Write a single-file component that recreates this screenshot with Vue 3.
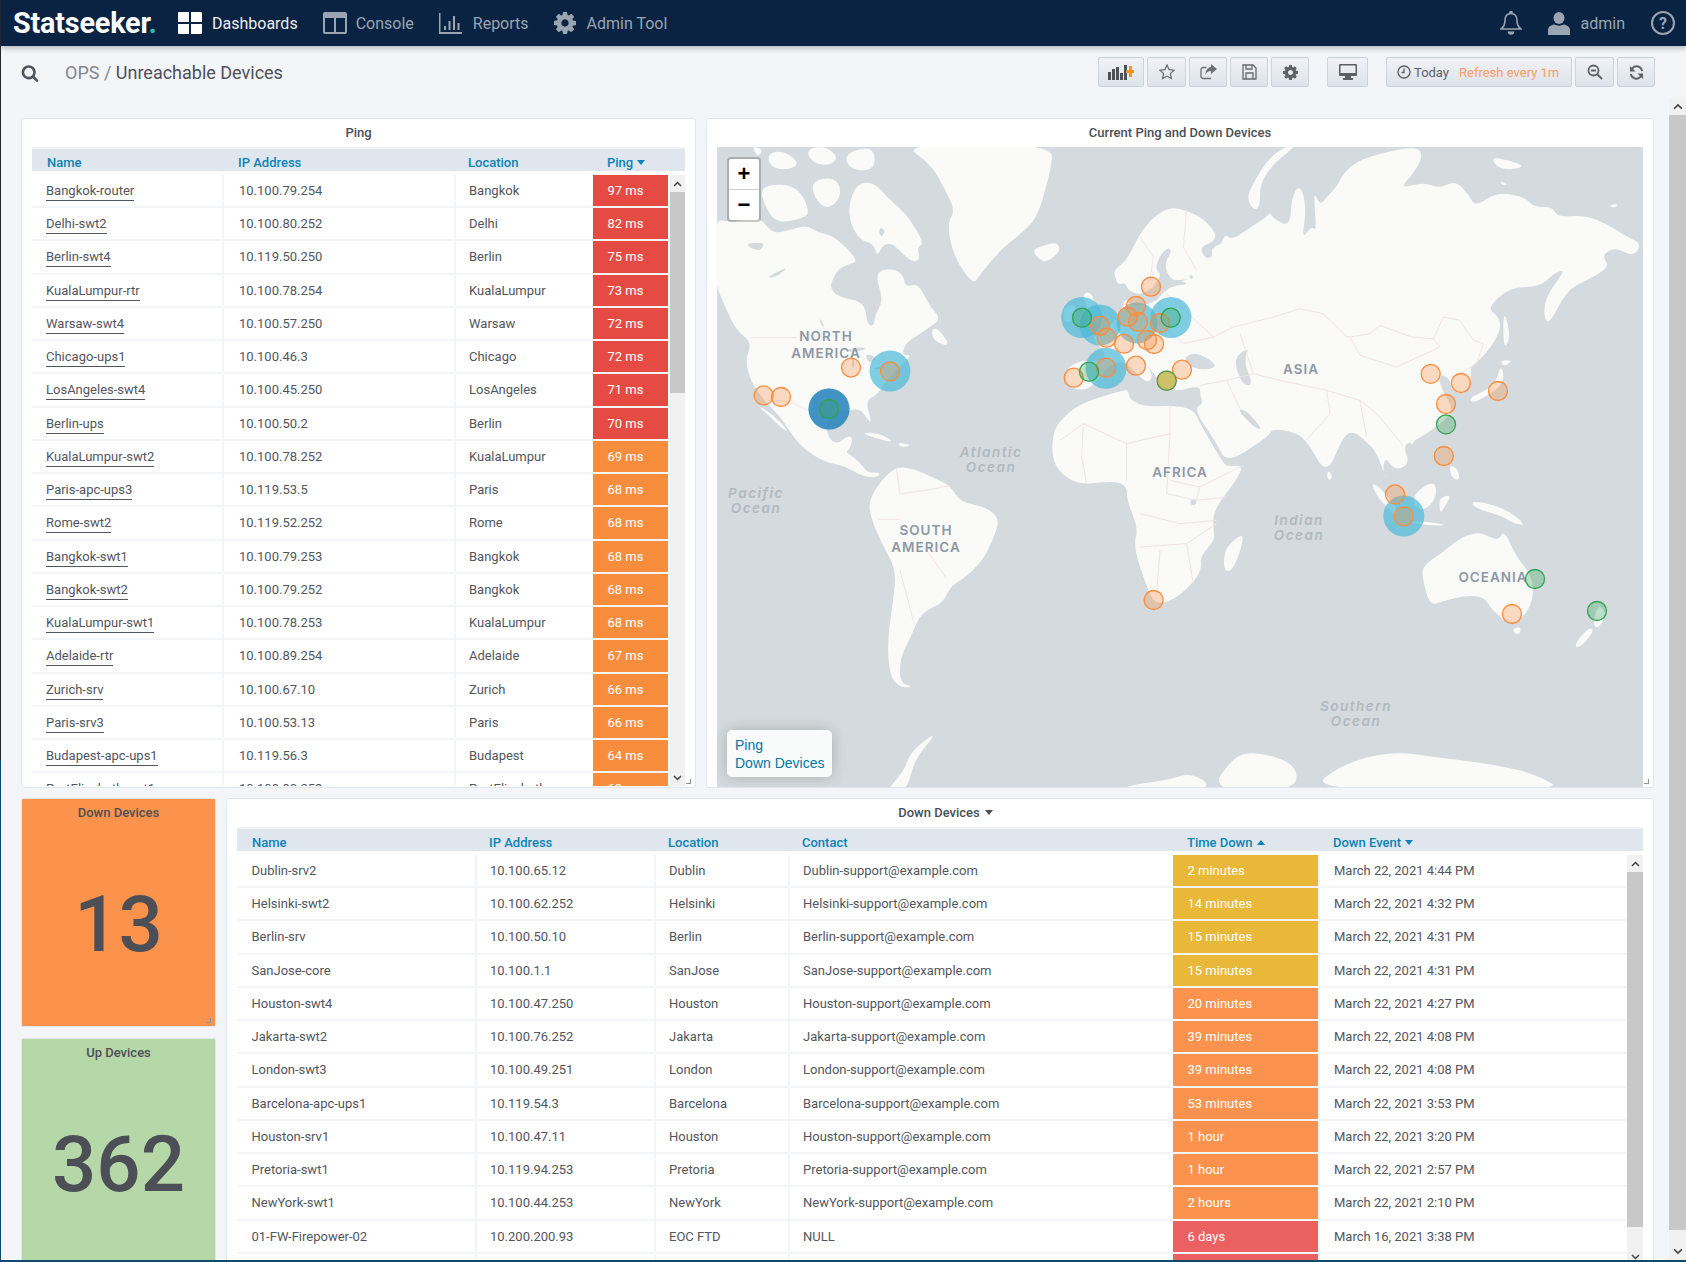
<script setup>
const gearPath = 'M1152 896q0-106-75-181t-181-75-181 75-75 181 75 181 181 75 181-75 75-181zm512-109v222q0 12-8 23t-20 13l-185 28q-19 54-39 91 35 50 107 138 10 12 10 25t-9 23q-27 37-99 108t-94 71q-12 0-26-9l-138-108q-44 23-91 38-16 136-29 186-7 28-36 28h-222q-14 0-24.5-8.5t-11.5-21.5l-28-184q-49-16-90-37l-141 107q-10 9-25 9-14 0-25-11-126-114-165-168-7-10-7-23 0-12 8-23 15-21 51-66.5t54-70.5q-27-50-41-99l-183-27q-13-2-21-12.5t-8-23.5v-222q0-12 8-23t19-13l186-28q14-46 39-92-40-57-107-138-10-12-10-24 0-10 9-23 26-36 98.5-107.5t94.5-71.5q13 0 26 10l138 107q44-23 91-38 16-136 29-186 7-28 36-28h222q14 0 24.5 8.5t11.5 21.5l28 184q49 16 90 37l142-107q9-9 24-9 13 0 25 10 129 119 165 170 7 8 7 22 0 12-8 23-15 21-51 66.5t-54 70.5q26 50 41 98l183 28q13 2 21 12.5t8 23.5z'
const searchPath = 'M1216 832q0-185-131.500-316.500t-316.500-131.500-316.500 131.500-131.500 316.500 131.500 316.500 316.500 131.500 316.500-131.500 131.500-316.500zm512 832q0 52-38 90t-90 38q-54 0-90-38l-343-342q-179 124-399 124-143 0-273.500-55.500t-225-150-150-225-55.500-273.500 55.500-273.500 150-225 225-150 273.500-55.500 273.500 55.500 225 150 150 225 55.500 273.500q0 220-124 399l343 343q37 37 37 90z'

const ping = [
  ['Bangkok-router', '10.100.79.254', 'Bangkok', 97],
  ['Delhi-swt2', '10.100.80.252', 'Delhi', 82],
  ['Berlin-swt4', '10.119.50.250', 'Berlin', 75],
  ['KualaLumpur-rtr', '10.100.78.254', 'KualaLumpur', 73],
  ['Warsaw-swt4', '10.100.57.250', 'Warsaw', 72],
  ['Chicago-ups1', '10.100.46.3', 'Chicago', 72],
  ['LosAngeles-swt4', '10.100.45.250', 'LosAngeles', 71],
  ['Berlin-ups', '10.100.50.2', 'Berlin', 70],
  ['KualaLumpur-swt2', '10.100.78.252', 'KualaLumpur', 69],
  ['Paris-apc-ups3', '10.119.53.5', 'Paris', 68],
  ['Rome-swt2', '10.119.52.252', 'Rome', 68],
  ['Bangkok-swt1', '10.100.79.253', 'Bangkok', 68],
  ['Bangkok-swt2', '10.100.79.252', 'Bangkok', 68],
  ['KualaLumpur-swt1', '10.100.78.253', 'KualaLumpur', 68],
  ['Adelaide-rtr', '10.100.89.254', 'Adelaide', 67],
  ['Zurich-srv', '10.100.67.10', 'Zurich', 66],
  ['Paris-srv3', '10.100.53.13', 'Paris', 66],
  ['Budapest-apc-ups1', '10.119.56.3', 'Budapest', 64],
  ['PortElizabeth-swt1', '10.100.90.253', 'PortElizabeth', 63],
]

const down = [
  ['Dublin-srv2', '10.100.65.12', 'Dublin', 'Dublin-support@example.com', '2 minutes', 'March 22, 2021 4:44 PM', 'yellow'],
  ['Helsinki-swt2', '10.100.62.252', 'Helsinki', 'Helsinki-support@example.com', '14 minutes', 'March 22, 2021 4:32 PM', 'yellow'],
  ['Berlin-srv', '10.100.50.10', 'Berlin', 'Berlin-support@example.com', '15 minutes', 'March 22, 2021 4:31 PM', 'yellow'],
  ['SanJose-core', '10.100.1.1', 'SanJose', 'SanJose-support@example.com', '15 minutes', 'March 22, 2021 4:31 PM', 'yellow'],
  ['Houston-swt4', '10.100.47.250', 'Houston', 'Houston-support@example.com', '20 minutes', 'March 22, 2021 4:27 PM', 'orange'],
  ['Jakarta-swt2', '10.100.76.252', 'Jakarta', 'Jakarta-support@example.com', '39 minutes', 'March 22, 2021 4:08 PM', 'orange'],
  ['London-swt3', '10.100.49.251', 'London', 'London-support@example.com', '39 minutes', 'March 22, 2021 4:08 PM', 'orange'],
  ['Barcelona-apc-ups1', '10.119.54.3', 'Barcelona', 'Barcelona-support@example.com', '53 minutes', 'March 22, 2021 3:53 PM', 'orange'],
  ['Houston-srv1', '10.100.47.11', 'Houston', 'Houston-support@example.com', '1 hour', 'March 22, 2021 3:20 PM', 'orange'],
  ['Pretoria-swt1', '10.119.94.253', 'Pretoria', 'Pretoria-support@example.com', '1 hour', 'March 22, 2021 2:57 PM', 'orange'],
  ['NewYork-swt1', '10.100.44.253', 'NewYork', 'NewYork-support@example.com', '2 hours', 'March 22, 2021 2:10 PM', 'orange'],
  ['01-FW-Firepower-02', '10.200.200.93', 'EOC FTD', 'NULL', '6 days', 'March 16, 2021 3:38 PM', 'red'],
  ['', '', '', '', '', '', 'red'],
]

// closed outline rounded through the midpoints of its edges
function smooth(str) {
  const p = str.trim().split(/\s+/).map((s) => s.split(',').map(Number))
  const mid = (a, b) => [(a[0] + b[0]) / 2, (a[1] + b[1]) / 2]
  const m0 = mid(p[0], p[1])
  let d = `M${m0[0]} ${m0[1]}`
  for (let i = 1; i <= p.length; i++) {
    const c = p[i % p.length]
    const m = mid(c, p[(i + 1) % p.length])
    d += `Q${c[0]} ${c[1]} ${m[0]} ${m[1]}`
  }
  return d + 'Z'
}

// traced at 3x from (717,147)
const naLand = [
  '0,215 30,225 80,220 130,215 150,240 175,260 230,245 270,235 300,255 345,265 380,295 405,320 420,345 400,350 365,365 345,400 340,425 365,450 420,460 445,480 450,530 470,540 475,500 495,470 490,430 480,400 485,370 530,365 560,385 565,420 600,410 620,440 640,480 672,515 640,540 600,565 565,590 555,625 585,625 545,660 500,710 480,745 445,760 465,830 450,815 430,785 390,790 345,800 325,840 340,880 365,890 385,870 408,868 400,905 385,915 410,930 440,960 453,978 485,975 490,985 465,992 430,985 380,955 320,945 260,905 230,870 190,810 160,780 130,745 100,700 85,640 100,600 95,580 55,545 30,490 0,425 -20,320',
  '555,-10 1010,-10 1000,70 990,110 960,215 900,270 860,300 790,380 770,415 710,330 690,230 715,190 680,120 640,50',
  '395,170 420,110 470,105 510,150 555,190 580,220 622,290 600,300 610,340 580,345 530,290 500,290 480,330 470,290 430,280 400,230',
  '130,120 200,110 250,130 280,200 250,215 210,225 170,220 140,170',
  '150,20 200,10 250,50 210,70 160,60', '265,10 320,-5 365,30 340,55 290,50', '380,20 470,-5 475,70 400,70',
  '285,100 360,90 375,150 330,190 290,150', '105,-5 140,10 120,30', '645,545 665,545 700,597 665,590 645,570',
  '115,770 165,800 215,852 200,850 150,800', '430,855 490,860 535,887 475,875', '540,885 588,895 550,902',
]
const naSea = [
  '85,290 145,285 130,312 105,305', '150,390 215,358 185,385 165,392', '305,510 325,540 312,535',
  '375,610 430,600 450,605 420,615', '405,625 415,650 405,668', '445,620 480,630 465,650 450,640', '465,665 495,655 490,668',
  '490,240 505,250 495,270 485,260',
]
// traced at 3x from (1040,147)
const euLand = [
  '75,710 78,670 100,650 135,640 190,645 195,610 150,575 200,545 240,505 255,450 275,480 340,470 370,430 400,410 440,400 470,370 520,300 545,290 555,260 575,280 640,235 680,210 690,195 700,215 750,240 755,150 780,110 800,180 785,280 815,235 830,255 820,130 840,175 860,150 890,120 915,70 975,30 1130,-5 1150,30 1115,85 1080,125 1150,105 1200,125 1245,100 1285,140 1305,180 1370,135 1455,150 1480,180 1540,180 1550,210 1635,205 1700,230 1760,270 1805,290 1780,330 1725,300 1685,325 1710,360 1640,400 1580,430 1520,548 1508,460 1580,365 1540,380 1500,420 1410,420 1340,485 1380,510 1380,560 1330,630 1290,660 1295,680 1280,740 1235,735 1230,695 1200,680 1200,720 1245,790 1190,840 1121,883 1089,895 1110,952 1062,971 1036,927 1027,977 1057,1015 1036,990 1009,914 977,883 940,851 908,870 860,988 800,879 760,855 700,845 690,860 670,879 560,949 530,889 460,785 490,770 480,745 480,715 400,735 365,715 370,725 350,690 310,640 340,680 325,710 290,680 250,640 200,660 175,700 140,730 100,725',
  '225,390 222,370 260,340 300,260 340,210 390,180 440,190 490,215 530,260 520,285 480,300 520,310 470,380 440,400 370,400 340,420 300,445 265,430 255,405 235,415',
  '125,440 155,435 165,480 200,530 130,545 150,500', '70,480 110,470 105,520 70,530',
  '-24,310 10,295 50,285 63,310 20,347 -5,335',
  '620,150 640,110 680,40 740,-5 770,-5 700,50 660,110 660,180 640,190',
  '40,850 75,805 130,765 250,730 265,730 270,760 320,780 390,775 460,785 480,830 545,940 560,959 610,954 590,999 520,1089 520,1149 525,1179 480,1229 485,1264 460,1309 400,1359 345,1372 320,1319 280,1199 295,1144 260,1059 262,1019 225,1001 120,1014 60,979 35,929',
  '605,1159 610,1184 580,1269 555,1274 550,1239 560,1199',
  '865,969 878,989 868,1001 860,989',
  '1350,30 1410,40 1460,60 1380,70', '1380,100 1405,115 1385,115', '1705,175 1735,170 1725,184',
  '1390,505 1400,510 1410,570 1395,605 1390,570', '1380,640 1420,640 1390,660',
  '1290,750 1340,730 1370,700 1380,660 1390,670 1390,710 1345,745 1295,770', '1110,885 1125,880 1115,895',
]
const euSea = [
  '335,445 340,415 365,385 345,365 360,325 385,300 395,315 372,350 390,398 435,405 440,412 395,418 365,440 345,468',
  '480,300 510,295 520,330 495,335', '430,630 470,615 535,655 500,670 450,660',
  '585,630 630,600 610,640 640,715 610,715 590,670', '590,785 620,790 670,850 640,840',
  '445,385 460,385 455,400', '450,1059 470,1054 468,1074 452,1074',
]
const euBorders = [
  '520,570 580,540 700,510 780,485 850,500 920,570 930,570 960,625 1070,660 1200,600 1180,575 1115,570 1020,535 990,560 930,570',
  '1180,575 1210,510 1260,520 1300,580 1330,590 1310,650 1240,690',
  '600,560 640,680 720,700 860,730 960,760 1010,800 1060,860 1089,895', '560,700 640,680',
  '860,730 870,800 800,879', '960,760 980,870', '480,715 560,700 600,785',
  '300,270 340,330 330,400', '440,190 430,300 470,370', '370,430 520,570', '360,470 360,530 430,590 520,570',
  '60,880 130,830 260,890 390,860 390,775', '130,830 125,930 140,1010', '260,890 260,1000',
  '390,860 380,1040 470,1060 560,1050', '300,1100 420,1130 530,1120', '300,1200 440,1190 530,1130', '360,1210 350,1340', '440,1190 460,1310',
  '390,1000 480,1020 610,955', '480,1020 470,1060',
]
// South America, and the islands further south-east, placed on the 2.8x and 2.82x traces
const saLand = [
  '475,850 510,805 550,775 600,780 650,800 700,820 730,860 800,870 840,900 820,950 790,1000 740,1040 700,1060 680,1100 620,1120 590,1180 560,1230 560,1290 600,1297 560,1300 530,1270 525,1180 540,1100 550,1020 510,960 475,890',
  '520,1545 570,1500 590,1450 670,1400 600,1470 580,1545',
]
const saBorders = [
  '550,780 560,840 640,830 700,820', '500,900 560,900 640,980 690,1040', '560,1020 600,1150',
]
const seLand = [
  '680,815 700,820 760,880 745,890 700,850', '800,840 860,805 865,850 830,880 800,870', '770,905 840,905 900,915 840,915',
  '870,850 910,840 880,880 875,885', '960,855 1050,870 1120,915 1080,910 1045,890 975,875', '900,770 925,780 930,810 905,800',
  '825,1010 880,980 930,945 980,930 1010,940 1040,950 1055,925 1090,990 1130,1030 1140,1080 1115,1130 1070,1150 1020,1115 1000,1085 950,1080 880,1095 845,1105 825,1040',
  '1075,1160 1105,1155 1095,1178', '1320,1100 1345,1125 1320,1160 1305,1150', '1295,1155 1310,1165 1270,1205 1250,1200',
  '-30,1545 0,1530 100,1520 180,1500 240,1545', '225,1545 290,1465 350,1450 470,1480 470,1545',
  '500,1545 600,1480 740,1450 870,1465 1050,1485 1160,1510 1220,1545',
]

const blue = [[1081.7,317.5],[1100,325],[1137,323],[1171,317.5],[1106,368.3],[890,371],[829,409],[1403.8,516]]
const orange = [[1151,286.7],[1136,306],[1127.7,316.7],[1138,321.7],[1160,323],[1100,325.7],[1106.7,337.7],[1124,343.7],[1147,340],[1154,344],[1136,365.7],[1106,367.7],[1182,369.7],[1073.7,377.7],[1166.7,380.7],[851,367.6],[890,371.4],[763.6,395.4],[781,397],[1153.6,600],[1430.7,373.9],[1460.9,383],[1498,391],[1446,404],[1443.8,456],[1395,494.4],[1403.8,516.3],[1512,614]]
const green = [[1082,317.7],[1170.7,317.7],[1089,371.7],[1166.7,380.7],[829,409],[1446,424.4],[1535,579],[1597,611]]

const labels = [
  ['NORTH', 826, 341, 'land'], ['AMERICA', 826, 358, 'land'],
  ['SOUTH', 926, 535, 'land'], ['AMERICA', 926, 552, 'land'],
  ['AFRICA', 1180, 477, 'land'], ['ASIA', 1301, 374, 'land'], ['OCEANIA', 1493, 582, 'land'],
  ['Atlantic', 991, 457, 'ocean'], ['Ocean', 991, 472, 'ocean'],
  ['Pacific', 756, 498, 'ocean'], ['Ocean', 756, 513, 'ocean'],
  ['Indian', 1299, 525, 'ocean'], ['Ocean', 1299, 540, 'ocean'],
  ['Southern', 1356, 711, 'ocean'], ['Ocean', 1356, 726, 'ocean'],
]
</script>

<template>
  <div class="frame">
    <div class="page">
      <header class="topnav">
        <div class="logo">Statseeker<span class="logo-dot">.</span></div>
        <nav class="nav">
          <a class="nav-item active">
            <svg class="ic-dash" viewBox="0 0 24 22"><path fill="#fff" d="M0 1a1 1 0 0 1 1-1h10v10H0zM13 0h10a1 1 0 0 1 1 1v9H13zM0 12h11v10H1a1 1 0 0 1-1-1zM13 12h11v9a1 1 0 0 1-1 1H13z"/></svg>
            <span>Dashboards</span>
          </a>
          <a class="nav-item">
            <svg class="ic-dash" viewBox="0 0 24 22"><path fill="#9aa5b1" fill-rule="evenodd" d="M2 0h20a2 2 0 0 1 2 2v18a2 2 0 0 1-2 2H2a2 2 0 0 1-2-2V2a2 2 0 0 1 2-2zM2 6v14h9V6zM13 6v14h9V6z"/></svg>
            <span>Console</span>
          </a>
          <a class="nav-item wide">
            <svg class="ic-rep" viewBox="0 0 23 21"><path fill="#9aa5b1" d="M0 0h1.500v19H23v2H0zM5 13h2v4H5zM9.500 8h2v9h-2zM14 3h2v14h-2zM18.500 10h2v7h-2z"/></svg>
            <span>Reports</span>
          </a>
          <a class="nav-item wide">
            <svg class="ic-gear" viewBox="128 128 1536 1536"><path fill="#9aa5b1" :d="gearPath"/></svg>
            <span>Admin Tool</span>
          </a>
        </nav>
        <div class="nav-right">
          <svg class="ic-bell" viewBox="0 0 22 24" fill="none" stroke="#9aa5b1" stroke-width="1.600"><path d="M11 2.500c-4 0-6 3-6 7 0 5-2 7-4 8.500h20c-2-1.500-4-3.500-4-8.500 0-4-2-7-6-7z"/><circle cx="11" cy="1.500" r="1" fill="#9aa5b1"/><path d="M8.500 20.500a2.500 2.500 0 0 0 5 0" fill="#9aa5b1"/></svg>
          <svg class="ic-user" viewBox="0 0 22 23"><ellipse cx="11" cy="6" rx="5.500" ry="6" fill="#9aa5b1"/><path fill="#9aa5b1" d="M0 23v-5c0-3 3-5 6-5.500 3 1.500 7 1.500 10 0 3 .5 6 2.500 6 5.500v5z"/></svg>
          <span class="admin">admin</span>
          <span class="help">?</span>
        </div>
      </header>

      <div class="toolbar">
        <svg class="ic-search" viewBox="0 0 1792 1792"><path fill="#50545c" :d="searchPath"/></svg>
        <div class="crumb"><span class="crumb-dim">OPS / </span>Unreachable Devices</div>
        <div class="tools">
          <button class="btn w46">
            <svg width="26" height="16" viewBox="0 0 26 16"><path fill="#4e5258" d="M0 8h3v8H0zM4 5h3v11H4zM8 3h3v13H8zM12 9h3v7h-3zM16 1h3v15h-3z"/><path fill="#f7941d" d="M18 6h3V2h3v4h2v3h-2v4h-3V9h-3z"/></svg>
          </button>
          <button class="btn w39">
            <svg width="16" height="16" viewBox="0 0 16 16" fill="none" stroke="#666b72" stroke-width="1.200"><path d="M8 1l2.100 4.600 5 .6-3.700 3.400 1 5L8 12.100 3.600 14.600l1-5L.9 6.200l5-.6z"/></svg>
          </button>
          <button class="btn w38">
            <svg width="17" height="16" viewBox="0 0 17 16" fill="none" stroke="#6b7077" stroke-width="1.300"><path d="M11 14.500H3a2 2 0 0 1-2-2v-7a2 2 0 0 1 2-2h3.500"/><path fill="#6b7077" stroke="none" d="M11 0l6 5-6 5V7C8 7 6.500 8 5.500 11 5.500 6.500 7.500 3.500 11 3z"/></svg>
          </button>
          <button class="btn w38">
            <svg width="15" height="16" viewBox="0 0 15 16" fill="none" stroke="#666b72" stroke-width="1.300"><path d="M1 1h10l3 3v11H1z"/><path d="M4 1v4h6V1M4 15V9h7v6"/></svg>
          </button>
          <button class="btn w38">
            <svg width="15" height="15" viewBox="128 128 1536 1536"><path fill="#5d6168" :d="gearPath"/></svg>
          </button>
          <button class="btn w41 group">
            <svg width="18" height="16" viewBox="0 0 18 16"><path fill="#5a5e65" fill-rule="evenodd" d="M1 0h16a1 1 0 0 1 1 1v10a1 1 0 0 1-1 1h-5v2h2v2H4v-2h2v-2H1a1 1 0 0 1-1-1V1a1 1 0 0 1 1-1zM1.500 1.500V9h15V1.500z"/></svg>
          </button>
          <button class="btn w186 group">
            <svg class="ic-clock" width="14" height="14" viewBox="0 0 14 14" fill="none" stroke="#5d6168" stroke-width="1.400"><circle cx="7" cy="7" r="6"/><path d="M7 3.500V7.500H4.500"/></svg>
            <span class="today">Today</span>
            <span class="refresh">Refresh every 1m</span>
          </button>
          <button class="btn w39">
            <svg width="16" height="16" viewBox="0 0 16 16" fill="none" stroke="#5d6168" stroke-width="1.800"><circle cx="6.500" cy="6.500" r="5"/><path d="M10.500 10.500L15 15M4 6.500h5"/></svg>
          </button>
          <button class="btn w38">
            <svg width="15" height="15" viewBox="0 0 16 16" fill="none" stroke="#5d6168" stroke-width="2"><path d="M14 6.500A6 6 0 0 0 3.500 3.500L2 5.500M2 9.500a6 6 0 0 0 10.500 3L14 10.500"/><path fill="#5d6168" stroke="none" d="M1 1v6h6zM15 15V9H9z"/></svg>
          </button>
        </div>
      </div>

      <div class="content">
        <main class="dash">
          <div class="row-top">
            <section class="panel">
              <div class="panel-title">Ping</div>
              <div class="thead-wrap">
                <div class="thead grid-ping">
                  <span>Name</span><span class="h-ip">IP Address</span><span class="h-loc">Location</span>
                  <span class="h-ping">Ping<i class="caret"></i></span>
                </div>
              </div>
              <div class="tbody ping-body">
                <div class="rows">
                  <div v-for="r in ping" :key="r[0]" class="trow grid-ping">
                    <div class="cell"><a class="devlink">{{ r[0] }}</a></div>
                    <div class="cell sep">{{ r[1] }}</div>
                    <div class="cell sep pad-loc">{{ r[2] }}</div>
                    <div class="cell val" :class="r[3] >= 70 ? 'c-pingred' : 'c-pingorange'">{{ r[3] }} ms</div>
                  </div>
                </div>
                <div class="sb sb-ping">
                  <div class="sb-btn"><svg width="9" height="6" viewBox="0 0 9 6" fill="none" stroke="#444" stroke-width="1.500"><path d="M1 5l3.500-3.500L8 5"/></svg></div>
                  <div class="sb-thumb t-ping"></div>
                  <div class="sb-space"></div>
                  <div class="sb-btn"><svg width="9" height="6" viewBox="0 0 9 6" fill="none" stroke="#444" stroke-width="1.500"><path d="M1 1l3.500 3.500L8 1"/></svg></div>
                </div>
              </div>
              <i class="grip"></i>
            </section>

            <section class="panel">
              <div class="panel-title">Current Ping and Down Devices</div>
              <div class="map">
                <svg class="map-svg" viewBox="717 147 927 642" width="927" height="642">
                  <g transform="translate(717 147) scale(.33333)">
                    <path v-for="(p, i) in naLand" :key="'na' + i" :d="smooth(p)" class="land"/>
                    <path v-for="(p, i) in naSea" :key="'ns' + i" :d="smooth(p)" class="sea"/>
                    <polyline points="100,572 240,572" class="border"/>
                    <polyline points="175,760 225,765 270,790" class="border"/>
                  </g>
                  <g transform="translate(700 140) scale(.35714 .42141)">
                    <path v-for="(p, i) in saLand" :key="'sa' + i" :d="smooth(p)" class="land"/>
                    <polyline v-for="(p, i) in saBorders" :key="'sb' + i" :points="p" class="border"/>
                  </g>
                  <g transform="translate(1040 147) scale(.33333)">
                    <path v-for="(p, i) in euLand" :key="'eu' + i" :d="smooth(p)" class="land"/>
                    <path v-for="(p, i) in euSea" :key="'es' + i" :d="smooth(p)" class="sea"/>
                    <polyline v-for="(p, i) in euBorders" :key="'eb' + i" :points="p" class="border"/>
                  </g>
                  <g transform="translate(1130 140) scale(.35461 .42141)">
                    <path v-for="(p, i) in seLand" :key="'se' + i" :d="smooth(p)" class="land"/>
                  </g>
                  <text v-for="(l, i) in labels" :key="'t' + i" :x="l[1]" :y="l[2]" :class="'lbl-' + l[3]">{{ l[0] }}</text>
                  <circle v-for="(c, i) in blue" :key="'b' + i" :cx="c[0]" :cy="c[1]" r="20.500" fill="#4ab9d9" fill-opacity=".7"/>
                  <circle cx="829" cy="409" r="20.500" fill="#2c7fb8" fill-opacity=".75"/>
                  <circle v-for="(c, i) in orange" :key="'o' + i" :cx="c[0]" :cy="c[1]" r="9.500" fill="#fd8d3c" fill-opacity=".3" stroke="#fd8d3c" stroke-width="1.300"/>
                  <circle v-for="(c, i) in green" :key="'g' + i" :cx="c[0]" :cy="c[1]" r="9.500" fill="#31a354" fill-opacity=".3" stroke="#31a354" stroke-width="1.300"/>
                  <circle cx="1166.700" cy="380.700" r="9" fill="#d6bc52" fill-opacity=".7"/>
                </svg>
                <div class="zoomctl">
                  <div class="zbtn zplus">+</div>
                  <div class="zbtn">−</div>
                </div>
                <div class="legend">
                  <div>Ping</div>
                  <div>Down Devices</div>
                </div>
              </div>
              <i class="grip"></i>
            </section>
          </div>

          <div class="row-bottom">
            <div class="tiles">
              <section class="tile t-orange">
                <div class="tile-title">Down Devices</div>
                <div class="tile-num">13</div>
                <i class="grip"></i>
              </section>
              <section class="tile t-green">
                <div class="tile-title">Up Devices</div>
                <div class="tile-num">362</div>
              </section>
            </div>

            <section class="panel panel-down">
              <div class="panel-title titled">Down Devices<i class="caret caret-dark"></i></div>
              <div class="thead-wrap">
                <div class="thead grid-down">
                  <span class="h-name">Name</span><span>IP Address</span><span>Location</span><span>Contact</span>
                  <span>Time Down<i class="caret caret-up"></i></span>
                  <span class="h-event">Down Event<i class="caret"></i></span>
                </div>
              </div>
              <div class="tbody down-body">
                <div class="rows">
                  <div v-for="(r, i) in down" :key="i" class="trow grid-down">
                    <div class="cell">{{ r[0] }}</div>
                    <div class="cell sep">{{ r[1] }}</div>
                    <div class="cell sep">{{ r[2] }}</div>
                    <div class="cell sep">{{ r[3] }}</div>
                    <div class="cell val" :class="'c-' + r[6]">{{ r[4] }}</div>
                    <div class="cell sep event">{{ r[5] }}</div>
                  </div>
                </div>
                <div class="sb sb-down">
                  <div class="sb-btn"><svg width="9" height="6" viewBox="0 0 9 6" fill="none" stroke="#444" stroke-width="1.500"><path d="M1 5l3.500-3.500L8 5"/></svg></div>
                  <div class="sb-thumb t-down"></div>
                  <div class="sb-space"></div>
                  <div class="sb-btn"><svg width="9" height="6" viewBox="0 0 9 6" fill="none" stroke="#444" stroke-width="1.500"><path d="M1 1l3.500 3.500L8 1"/></svg></div>
                </div>
              </div>
            </section>
          </div>
        </main>

        <aside class="sb sb-page">
          <div class="sb-btn"><svg width="10" height="7" viewBox="0 0 9 6" fill="none" stroke="#444" stroke-width="1.500"><path d="M1 5l3.500-3.500L8 5"/></svg></div>
          <div class="sb-thumb t-page"></div>
          <div class="sb-space"></div>
          <div class="sb-btn"><svg width="10" height="7" viewBox="0 0 9 6" fill="none" stroke="#444" stroke-width="1.500"><path d="M1 1l3.500 3.500L8 1"/></svg></div>
        </aside>
      </div>
    </div>
  </div>
</template>

<style>
html, body { margin: 0; background: #f4f5f8; }
</style>

<style scoped>
.frame {
  width: 1686px;
  height: 1262px;
  overflow: hidden;
  background: linear-gradient(to bottom, #24272d 0, #24272d 760px, #0f4c6b 760px);
  font-family: Roboto, "Liberation Sans", sans-serif;
  font-size: 13px;
  color: #53565d;
}
.page {
  margin-left: 1px;
  height: 1260px;
  background: #f4f5f8;
  display: flex;
  flex-direction: column;
  overflow: hidden;
}

/* top navigation */
.topnav {
  height: 46px;
  flex: none;
  background: #0a2342;
  display: flex;
  align-items: center;
  box-shadow: 0 2px 6px rgba(0, 0, 0, .28);
  position: relative;
  z-index: 2;
  padding-left: 12px;
}
.logo {
  width: 165px;
  font-size: 28.800px;
  font-weight: 700;
  letter-spacing: -.2px;
  color: #fff;
  white-space: nowrap;
}
.logo-dot { color: #3fb6a8; }
.nav { display: flex; align-items: center; gap: 25px; }
.nav-item {
  display: flex;
  align-items: center;
  gap: 9px;
  font-size: 16px;
  color: #9aa5b1;
}
.nav-item.wide { gap: 11px; }
.nav-item.active { color: #eceff2; gap: 10px; }
.ic-dash { width: 24px; height: 22px; }
.ic-rep { width: 23px; height: 21px; }
.ic-gear { width: 22px; height: 22px; }
.nav-right {
  margin-left: auto;
  display: flex;
  align-items: center;
  padding-right: 11px;
}
.ic-bell { width: 22px; height: 24px; }
.ic-user { width: 22px; height: 23px; margin-left: 26px; }
.admin { font-size: 16px; color: #9aa5b1; margin-left: 11px; }
.help {
  margin-left: 26px;
  width: 20px;
  height: 20px;
  border: 2px solid #9aa5b1;
  border-radius: 50%;
  color: #9aa5b1;
  font-size: 16px;
  font-weight: 700;
  display: flex;
  align-items: center;
  justify-content: center;
}

/* toolbar */
.toolbar {
  height: 52px;
  flex: none;
  display: flex;
  align-items: flex-start;
}
.ic-search { width: 18px; height: 18px; margin: 18px 0 0 20px; }
.crumb {
  margin: 15px 0 0 26px;
  font-size: 18px;
  line-height: 24px;
  color: #4c5058;
}
.crumb-dim { color: #82868f; }
.tools {
  margin-left: auto;
  margin-top: 11px;
  margin-right: 31px;
  display: flex;
  gap: 3px;
}
.btn {
  height: 30px;
  padding: 0;
  border: 1px solid #c9d3de;
  border-radius: 2px;
  background: linear-gradient(#f0f2f6, #dee4eb);
  display: flex;
  align-items: center;
  justify-content: center;
  font-family: inherit;
  font-size: 13px;
}
.w46 { width: 46px; }
.w39 { width: 39px; }
.w38 { width: 38px; }
.w41 { width: 41px; }
.w186 { width: 186px; justify-content: flex-start; padding-left: 10px; }
.btn.group { margin-left: 15px; }
.today { margin-left: 3px; color: #5d6168; }
.refresh { margin-left: 10px; color: #fb9d5e; }

/* dashboard body */
.content { flex: 1; display: flex; min-height: 0; }
.dash {
  flex: 1;
  min-width: 0;
  padding: 20px 14px 0 20px;
  overflow: hidden;
}
.row-top {
  display: grid;
  grid-template-columns: 675px 948px;
  gap: 10px;
  height: 670px;
}
.row-bottom {
  margin-top: 10px;
  display: grid;
  grid-template-columns: 195px 1428px;
  gap: 10px;
}
.panel {
  position: relative;
  background: #fff;
  border: 1px solid #e0e6ed;
  border-radius: 3px;
  padding: 0 10px;
  box-sizing: border-box;
  overflow: hidden;
  display: flex;
  flex-direction: column;
}
.panel-title {
  height: 28px;
  flex: none;
  text-align: center;
  line-height: 28px;
  font-weight: 500;
  color: #4a4f57;
}
.thead-wrap {
  flex: none;
  padding-top: 2px;
  background: #f1f3f6;
  margin-bottom: 4px;
}
.thead {
  height: 22px;
  background: #dfe6ee;
  color: #0b84b5;
  font-weight: 500;
  line-height: 27px;
}
.thead span { padding-left: 14px; display: block; white-space: nowrap; }
.grid-ping { display: grid; grid-template-columns: 190px 232px 139px 75px; }
.grid-down { display: grid; grid-template-columns: 238px 179px 134px 385px 145px 309px; }
.thead.grid-ping { grid-template-columns: 190px 232px 139px 91px; }
.thead.grid-down { grid-template-columns: 238px 179px 134px 385px 145px 325px; }
.thead.grid-ping span:first-child { padding-left: 15px; }
.thead span.h-ip { padding-left: 16px; }
.thead span.h-name { padding-left: 15px; }
.thead span.h-event { padding-left: 15px; }
.caret {
  display: inline-block;
  border-left: 4.500px solid transparent;
  border-right: 4.500px solid transparent;
  border-top: 5px solid #0b84b5;
  margin-left: 4px;
  vertical-align: 2px;
}
.caret-up { border-top: 0; border-bottom: 5px solid #0b84b5; }
.caret-dark { border-top-color: #4a4f57; margin-left: 5px; }

.tbody { display: flex; overflow: hidden; background: #fff; }
.ping-body { height: 611px; }
.down-body { height: 410px; }
.rows { flex: 1; min-width: 0; overflow: hidden; }
.trow {
  height: 31.240px;
  margin-bottom: 2px;
  box-shadow: 0 2px 0 #f4f5f8;
  background: #fff;
}
.cell {
  padding-left: 14.500px;
  line-height: 31.240px;
  white-space: nowrap;
  overflow: hidden;
}
.grid-ping .cell:first-child { padding-left: 14px; }
.sep { border-left: 2px solid #f4f5f8; padding-left: 13px; }
.sep.event { padding-left: 14px; }
.grid-ping .sep { padding-left: 15px; }
.grid-ping .pad-loc { padding-left: 13px; }
.val { color: #fff; background: #ccc; padding-left: 14.500px; }
.c-pingred { background: #e54b43; }
.c-pingorange { background: #f88d3e; }
.c-yellow { background: #e9b838; }
.c-orange { background: #fb934e; }
.c-red { background: #eb6060; }
.devlink {
  display: inline;
  padding-bottom: 2px;
  border-bottom: 1px solid #53565d;
}

/* scrollbars */
.sb {
  flex: none;
  width: 15px;
  background: #f1f1f1;
  display: flex;
  flex-direction: column;
}
.sb-btn {
  flex: none;
  height: 17px;
  display: flex;
  align-items: center;
  justify-content: center;
}
.sb-thumb { flex: none; background: #c8c8c8; }
.sb-space { flex: 1; }
.t-ping { height: 201px; }
.t-down { height: 355px; }
.t-page { height: 1115px; }
.sb-page { width: 17px; }
.sb-down { width: 16px; }

/* map */
.map {
  flex: 1;
  position: relative;
  background: #d4dadd;
  overflow: hidden;
}
.map-svg { display: block; }
.land { fill: #fafaf9; }
.sea { fill: #d4dadd; }
.border { fill: none; stroke: #f2e4e4; stroke-width: 1; vector-effect: non-scaling-stroke; }
.lbl-land {
  font-family: Inter, "Liberation Sans", sans-serif;
  font-size: 13.500px;
  font-weight: 600;
  letter-spacing: 1px;
  fill: #8d98a5;
  text-anchor: middle;
}
.lbl-ocean {
  font-family: Inter, "Liberation Sans", sans-serif;
  font-size: 13.500px;
  font-weight: 600;
  font-style: italic;
  letter-spacing: 1.500px;
  fill: #b0b9c1;
  text-anchor: middle;
}
.zoomctl {
  position: absolute;
  left: 10px;
  top: 10px;
  width: 30px;
  border: 2px solid rgba(0, 0, 0, .2);
  border-radius: 4px;
  background: #fff;
  background-clip: padding-box;
  overflow: hidden;
}
.zbtn {
  height: 30px;
  line-height: 30px;
  text-align: center;
  font: bold 22px/30px "Liberation Sans", sans-serif;
  color: #000;
}
.zplus { border-bottom: 1px solid #ccc; }
.legend {
  position: absolute;
  left: 10px;
  bottom: 10px;
  width: 105px;
  height: 47px;
  box-sizing: border-box;
  padding: 6px 8px;
  background: rgba(255, 255, 255, .85);
  border-radius: 5px;
  box-shadow: 0 0 15px rgba(0, 0, 0, .2);
  font: 14px/18px "Liberation Sans", sans-serif;
  color: #0078a8;
  white-space: nowrap;
}

/* tiles */
.tiles { display: flex; flex-direction: column; gap: 11px; }
.tile {
  position: relative;
  height: 229px;
  flex: none;
  box-sizing: border-box;
  border: 1px solid #e0e6ed;
  border-radius: 2px;
  text-align: center;
  color: #4c4f56;
}
.t-orange { background: #fc934d; }
.t-green { background: #b6d8a8; }
.tile-title { height: 28px; line-height: 28px; font-weight: 500; }
.tile-num { margin-top: 52.500px; font-size: 78px; line-height: 90px; font-weight: 500; }
.grip {
  position: absolute;
  right: 4px;
  bottom: 3px;
  width: 4px;
  height: 4px;
  border-right: 1.500px solid #8f959c;
  border-bottom: 1.500px solid #8f959c;
}
.panel-down { overflow: hidden; height: 470px; }
.titled { padding-left: 11px; }
</style>
